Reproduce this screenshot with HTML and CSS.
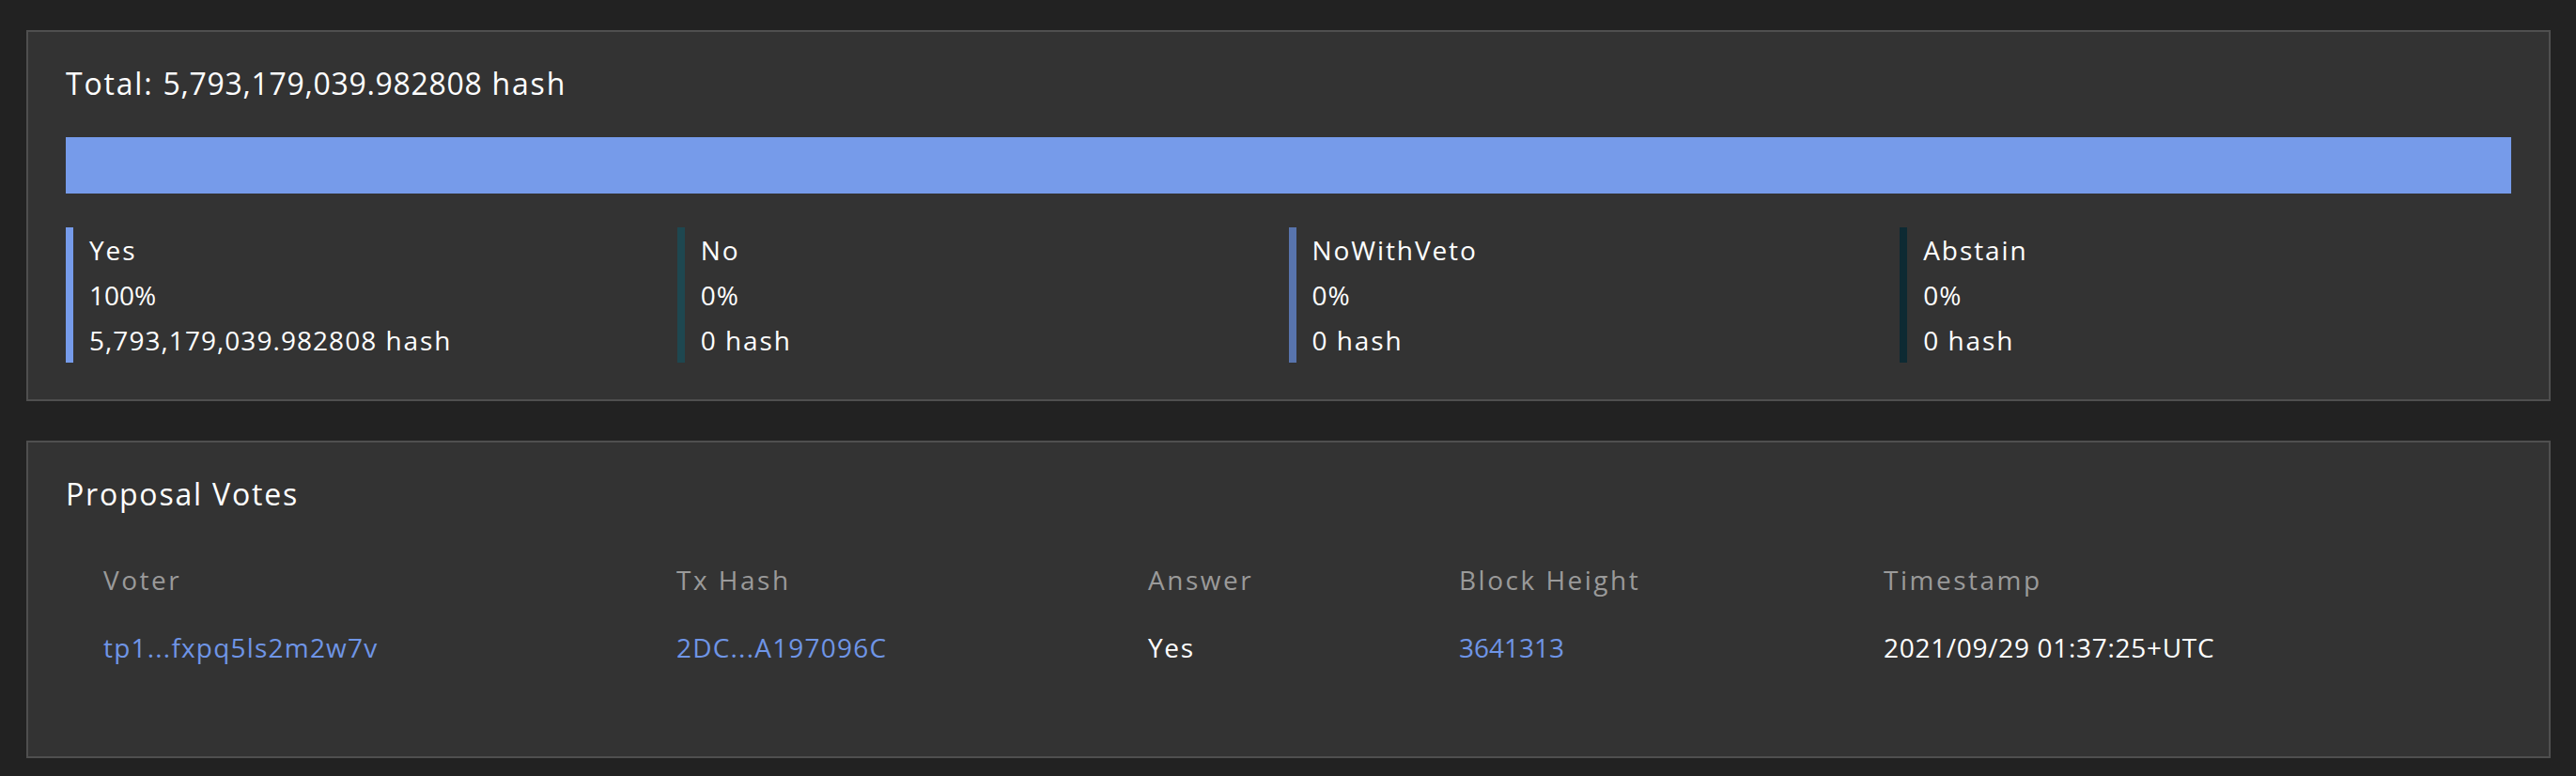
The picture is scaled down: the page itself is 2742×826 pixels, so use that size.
FILE: index.html
```html
<!DOCTYPE html>
<html lang="en">
<head>
<meta charset="utf-8">
<title>Proposal Votes</title>
<link rel="stylesheet" href="styles.css">
</head>
<body>
<main class="page">
  <section class="panel tally">
    <h2 class="title">Total: <span class="num">5,793,179,039.982808</span> hash</h2>
    <div class="bar">
      <div class="bar-seg seg-yes" style="width:100%"></div>
    </div>
    <div class="legend">
      <div class="legend-item item-yes">
        <div class="legend-line">Yes</div>
        <div class="legend-line"><span class="num tight">100%</span></div>
        <div class="legend-line"><span class="num">5,793,179,039.982808</span> hash</div>
      </div>
      <div class="legend-item item-no">
        <div class="legend-line">No</div>
        <div class="legend-line"><span class="num">0%</span></div>
        <div class="legend-line"><span class="num">0</span> hash</div>
      </div>
      <div class="legend-item item-veto">
        <div class="legend-line">NoWithVeto</div>
        <div class="legend-line"><span class="num">0%</span></div>
        <div class="legend-line"><span class="num">0</span> hash</div>
      </div>
      <div class="legend-item item-abstain">
        <div class="legend-line">Abstain</div>
        <div class="legend-line"><span class="num">0%</span></div>
        <div class="legend-line"><span class="num">0</span> hash</div>
      </div>
    </div>
  </section>

  <section class="panel votes">
    <h2 class="title">Proposal Votes</h2>
    <div class="table">
      <div class="row head">
        <div class="cell">Voter</div>
        <div class="cell">Tx Hash</div>
        <div class="cell">Answer</div>
        <div class="cell">Block Height</div>
        <div class="cell">Timestamp</div>
      </div>
      <div class="row">
        <div class="cell"><a class="link" href="#">tp1...fxpq5ls2m2w7v</a></div>
        <div class="cell"><a class="link" href="#">2DC...A197096C</a></div>
        <div class="cell">Yes</div>
        <div class="cell"><a class="link num tight" href="#">3641313</a></div>
        <div class="cell"><span class="num">2021/09/29 01:37:25+UTC</span></div>
      </div>
    </div>
  </section>
</main>
</body>
</html>
```

FILE: styles.css
```css
* { box-sizing: border-box; }

html, body {
  margin: 0;
  padding: 0;
  background: #222222;
}

body {
  font-family: "Open Sans", "Noto Sans", "DejaVu Sans", sans-serif;
  color: #ffffff;
}

.page {
  padding: 32px 27px 0 28px;
  display: flex;
  flex-direction: column;
  gap: 42px;
}

.panel {
  background: #333333;
  border: 2px solid #4f4f4f;
}

.tally {
  padding: 35px 40px 39px;
}

.votes {
  padding: 35px 40px 80px;
}

.title {
  margin: 0;
  font-size: 32px;
  line-height: 40px;
  font-weight: 400;
  letter-spacing: 1.8px;
}

.num {
  letter-spacing: 0.7px;
}

.legend-line .num {
  letter-spacing: 1.05px;
}

.num.tight,
.legend-line .num.tight {
  letter-spacing: 0;
}

.bar {
  margin-top: 37px;
  height: 60px;
  display: flex;
  background: #2a2a2a;
}

.bar-seg { height: 100%; }
.seg-yes { background: #769bea; }

.legend {
  margin-top: 36px;
  display: grid;
  grid-template-columns: repeat(4, 1fr);
}

.legend-item {
  border-left: 8px solid #769bea;
  padding-left: 17px;
}

.item-yes { border-left-color: #769bea; }
.item-no { border-left-color: #1e4750; }
.item-veto { border-left-color: #5874ad; }
.item-abstain { border-left-color: #0e2a33; }

.legend-line {
  font-size: 28px;
  line-height: 48px;
  letter-spacing: 1.9px;
}

.table {
  margin-top: 35px;
  padding-left: 40px;
}

.row {
  display: grid;
  grid-template-columns: 610px 502px 331px 452px 1fr;
  height: 72px;
  align-items: center;
  font-size: 28px;
  line-height: 72px;
  letter-spacing: 1.7px;
}

.head {
  color: #9a9a9a;
  letter-spacing: 2.5px;
}

.link {
  color: #6f95e6;
  text-decoration: none;
  letter-spacing: 1.2px;
}
```
